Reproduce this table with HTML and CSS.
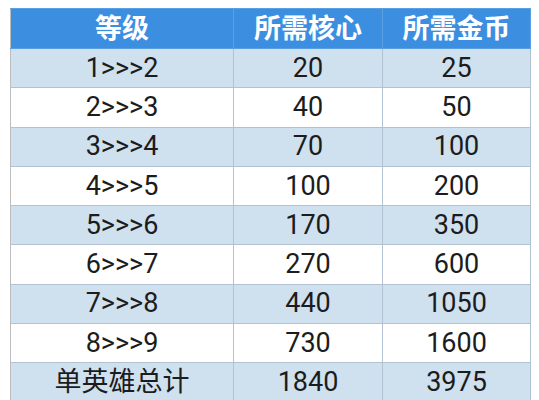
FILE: index.html
```html
<!DOCTYPE html>
<html lang="zh">
<head>
<meta charset="utf-8">
<link rel="stylesheet" href="styles.css">
</head>
<body>
<table class="cost-table">
  <colgroup>
    <col class="col-level">
    <col class="col-core">
    <col class="col-gold">
  </colgroup>
  <thead>
    <tr><th>等级</th><th>所需核心</th><th>所需金币</th></tr>
  </thead>
  <tbody>
    <tr class="alt"><td>1&gt;&gt;&gt;2</td><td>20</td><td>25</td></tr>
    <tr><td>2&gt;&gt;&gt;3</td><td>40</td><td>50</td></tr>
    <tr class="alt"><td>3&gt;&gt;&gt;4</td><td>70</td><td>100</td></tr>
    <tr><td>4&gt;&gt;&gt;5</td><td>100</td><td>200</td></tr>
    <tr class="alt"><td>5&gt;&gt;&gt;6</td><td>170</td><td>350</td></tr>
    <tr><td>6&gt;&gt;&gt;7</td><td>270</td><td>600</td></tr>
    <tr class="alt"><td>7&gt;&gt;&gt;8</td><td>440</td><td>1050</td></tr>
    <tr><td>8&gt;&gt;&gt;9</td><td>730</td><td>1600</td></tr>
    <tr class="alt"><td>单英雄总计</td><td>1840</td><td>3975</td></tr>
  </tbody>
</table>
</body>
</html>
```

FILE: styles.css
```css
html, body {
  margin: 0;
  padding: 0;
  background: #ffffff;
}

body {
  padding: 8px 0 0 10px;
  font-family: Roboto, "Noto Sans CJK SC", sans-serif;
  color: #1c1c1c;
}

.cost-table {
  border-collapse: collapse;
  table-layout: fixed;
  width: 520px;
}

.col-level { width: 223px; }
.col-core { width: 149px; }
.col-gold { width: 148px; }

.cost-table th,
.cost-table td {
  padding: 0;
  text-align: center;
  border: 1px solid #b3c2d2;
  box-sizing: border-box;
}

.cost-table th {
  height: 40px;
  background: #3c8ee0;
  color: #ffffff;
  font-size: 27px;
  font-weight: 700;
  line-height: 38px;
  border-color: #5a9fe2;
  border-left-color: #8fa9c6;
}

.cost-table td {
  height: 39.3px;
  font-size: 27px;
  line-height: 37px;
  background: #ffffff;
}

.cost-table tr.alt td {
  background: #cfe0ef;
}

.cost-table tr > :first-child {
  border-left-color: #bdbdbd;
}
```
